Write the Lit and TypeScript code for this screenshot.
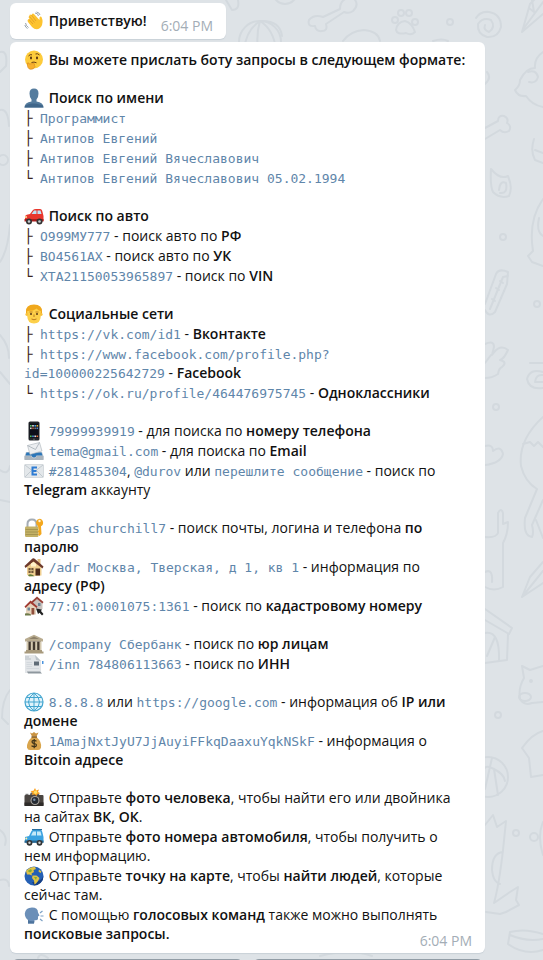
import { LitElement, html, css, svg, TemplateResult } from "lit";

const icons: Record<string, TemplateResult> = {
  wave: svg`
    <path d="M4 11 8 16Q12 20 16 17Q19 14 18.500 9L17.500 6Q16.500 5 15.500 6.500L15.500 9 10 3Q9 2 8 3L7.500 4 6 3.500Q5 4 5.500 5L4.500 6 5.500 8 4 8.500Q3 9.500 4 11Z" fill="#fdc32f"/>
    <path d="M7.500 4 12 10M5.500 5.500 10.500 11.500M5 8.500 9 13" stroke="#e09a28" stroke-width=".8" fill="none"/>
    <path d="M11 2Q14 2 14.500 5M12.500 1Q15.500 1.500 16 4M1.500 12Q2 15 4.500 16.500M.8 14Q1.500 16.500 3.500 17.500" stroke="#8d9aa5" stroke-width=".9" fill="none"/>`,
  think: svg`
    <circle cx="10" cy="9.500" r="9" fill="#fdcb3b"/>
    <ellipse cx="7" cy="8" rx="1" ry="1.400" fill="#553010"/><ellipse cx="13" cy="8" rx="1" ry="1.400" fill="#553010"/>
    <path d="M4.500 6Q6 4 8 4.800M11.500 4Q13.500 3 15.500 5M7.500 12.500Q10 11.500 12.500 12.800" stroke="#6b3f12" stroke-width="1" fill="none"/>
    <path d="M3.500 13Q4.500 12 5 14L10 13.500Q11.500 14 10 15L11 16.500Q10 19.500 6.500 19.300Q3 19 3.500 13Z" fill="#f8b02d" stroke="#d68419" stroke-width=".6"/>`,
  bust: svg`
    <path d="M10 .5Q14.500 .5 14.500 5.500Q14.500 9.500 12.500 11.500V13.500Q19.500 14.500 19.500 19.500H.5Q.5 14.500 7.500 13.500V11.500Q5.500 9.500 5.500 5.500Q5.500 .5 10 .5Z" fill="#557c9e"/>
    <path d="M1 18Q4 15 10 15.500T19 18L19.500 19.500H.5Z" fill="#3f668a"/>`,
  car: svg`
    <path d="M1 10Q2 8.500 6 8L9 4Q10 3 12 3H16Q18 3 18.500 6L19.500 10V15H1Z" fill="#e8372d"/>
    <path d="M7.500 8 10 4.500H12.500V8ZM13.500 4.500H16.500L17.500 8H13.500Z" fill="#bfe3f5"/>
    <path d="M.5 13H19.500V15.500H.5Z" fill="#a81d1c"/>
    <circle cx="5" cy="15.500" r="3" fill="#333"/><circle cx="5" cy="15.500" r="1.300" fill="#c9ced2"/>
    <circle cx="15.500" cy="15.500" r="3" fill="#333"/><circle cx="15.500" cy="15.500" r="1.300" fill="#c9ced2"/>
    <circle cx="2" cy="11" r="1" fill="#ffe9a0"/>`,
  man: svg`
    <path d="M2 8Q1.500 .5 10 .5T18 8V10H2Z" fill="#f0a81c"/>
    <path d="M3.200 7Q10 7 12.500 4.500Q14.500 6.500 16.800 7V12Q16.500 19.500 10 19.500T3.200 12Z" fill="#fdd04a"/>
    <circle cx="2.800" cy="10.500" r="1.400" fill="#f9c23c"/><circle cx="17.200" cy="10.500" r="1.400" fill="#f9c23c"/>
    <circle cx="7" cy="10" r="1" fill="#5a3a17"/><circle cx="13" cy="10" r="1" fill="#5a3a17"/>
    <path d="M5.500 8H8.500M11.500 8H14.500M7.500 15Q10 16.500 12.500 15M10 10.500V13" stroke="#b5741b" stroke-width=".9" fill="none"/>`,
  phone: svg`
    <rect x="4.500" y=".5" width="11" height="19" rx="1.600" fill="#23262b"/>
    <rect x="5.500" y="2.500" width="9" height="14.500" fill="#0c0e18"/>
    <g><rect x="6" y="4" width="1.600" height="1.600" fill="#53c36b"/><rect x="8.200" y="4" width="1.600" height="1.600" fill="#e9e9e9"/><rect x="10.400" y="4" width="1.600" height="1.600" fill="#4aa3e8"/><rect x="12.500" y="4" width="1.600" height="1.600" fill="#e5b53c"/>
    <rect x="6" y="6.500" width="1.600" height="1.600" fill="#d4d4d4"/><rect x="8.200" y="6.500" width="1.600" height="1.600" fill="#b7653f"/><rect x="10.400" y="6.500" width="1.600" height="1.600" fill="#777"/><rect x="12.500" y="6.500" width="1.600" height="1.600" fill="#5a8bd6"/>
    <rect x="6" y="14.500" width="1.600" height="1.600" fill="#50c15b"/><rect x="8.200" y="14.500" width="1.600" height="1.600" fill="#4b8fdd"/><rect x="10.400" y="14.500" width="1.600" height="1.600" fill="#ddd"/><rect x="12.500" y="14.500" width="1.600" height="1.600" fill="#e9733c"/></g>
    <circle cx="10" cy="18.200" r=".8" fill="#666"/>`,
  inbox: svg`
    <path d="M2 11H18L19.500 15V18.500H.5V15Z" fill="#c3cbd3"/>
    <path d="M2.500 11.500H17.500L18.500 14.500H12.500Q12 16.500 10 16.500T7.500 14.500H1.500Z" fill="#2c76b8"/>
    <path d="M3.500 4.500 15.500 1.500 18 10 6 13.500Z" fill="#eceef0" stroke="#a9b1b8" stroke-width=".6"/>
    <path d="M3.500 4.500 11.500 8.500 15.500 1.500" fill="none" stroke="#a4adb5" stroke-width=".8"/>
    <path d="M.5 15H7Q8 17.500 10 17.500T13 15H19.500V19H.5Z" fill="#aab4bd"/>`,
  email: svg`
    <rect x=".5" y="3.500" width="19" height="13" rx=".8" fill="#e3e7ea" stroke="#c3c9ce" stroke-width=".6"/>
    <path d="M1 16 7.500 9.500M19 16 12.500 9.500M1 4 10 11 19 4" stroke="#b9c1c8" stroke-width=".8" fill="none"/>
    <path d="M13 6.500H8.500V13.500H13M8.500 10H12.500" stroke="#2e7cd3" stroke-width="2" fill="none"/>`,
  lock: svg`
    <path d="M3.500 9V6Q3.500 1.500 8 1.500T12.500 6V9" stroke="#a5adb5" stroke-width="2" fill="none"/>
    <rect x="1" y="8.500" width="13.500" height="10.500" rx="1.200" fill="#c3b166"/>
    <path d="M1.500 11.500H14M1.500 14H14M1.500 16.500H14" stroke="#9d8d4a" stroke-width=".8"/>
    <path d="M15.500 .8A4 4 0 0 1 17 8.300L17.500 16 15.500 18 14 16.500 14.800 15 13.800 13.500 14.800 12 14 8.200A4 4 0 0 1 15.500 .8Z" fill="#f3a71d"/>
    <circle cx="15.500" cy="3" r="1.200" fill="#fff4d6"/>`,
  house: svg`
    <path d="M3 9 9 3.500 17.500 10V18.500L5 19.500 3 17.500Z" fill="#f0cf91"/>
    <path d="M13.500 2H16.500V7H13.500Z" fill="#e2bd80"/>
    <path d="M.5 9 8.500 1.500Q10 1 11 2L19.500 9.500 18.500 11.500 9.500 4.500 1.500 11Z" fill="#6d3a2c"/>
    <path d="M7 6.500 9.500 5 12 7V9.500H7Z" fill="#fff2cb"/>
    <rect x="4.500" y="11" width="5" height="5" fill="#70563a"/><rect x="11.500" y="11.500" width="4.500" height="7" fill="#4c2c1c"/>
    <path d="M7 11V16M4.500 13.500H9.500" stroke="#e8cf92" stroke-width=".7"/>
    <path d="M4 18Q7 16 10.500 19.300H5Z" fill="#5c7a3a"/>`,
  houses: svg`
    <path d="M8 5 13 1.500 18.500 6V13H8Z" fill="#c9c2bd"/><path d="M7 6 13 .5 19.500 6 18.500 7.500 13 3 8 7.500Z" fill="#9a4137"/>
    <rect x="14" y="7" width="2.500" height="3" fill="#6e8494"/>
    <path d="M2 10 6.500 6 12 10.500V18.500H2Z" fill="#e6d4bd"/><path d="M.5 10.500 6.500 4.500 13.500 10.500 12.500 12 6.500 7.300 1.500 12Z" fill="#a03a31"/>
    <rect x="3.500" y="11.500" width="2.500" height="3" fill="#6d8799"/><rect x="7.500" y="12" width="2.800" height="6.500" fill="#91503d"/>
    <path d="M12 12.500 18 13.500 17 15 19.500 18 18 19.500 15.500 16.700 14 18Z" fill="#222"/>
    <path d="M1 17.500Q4 16.500 7 18.500V19.500H1Z" fill="#6e7b4a"/>`,
  bank: svg`
    <path d="M10 .8 19 5V7.500H1V5Z" fill="#b9ac90"/><path d="M10 2.500 15 5H5Z" fill="#8d8069"/>
    <rect x="3" y="7.500" width="14" height="9" fill="#42392f"/>
    <path d="M3.500 7.500V16.500M7.800 7.500V16.500M12.200 7.500V16.500M16.500 7.500V16.500" stroke="#d5cab1" stroke-width="2"/>
    <path d="M2 16H18V17.500H19.500V19.500H.5V17.500H2Z" fill="#a89a7d"/>`,
  news: svg`
    <path d="M1 1H11L17 7V19H1Z" fill="#e2e5e8"/><path d="M11 1 12 6 17 7Z" fill="#bcc3c9"/>
    <path d="M1 3H5M1 5H7" stroke="#aeb6bd" stroke-width=".8"/>
    <rect x="10" y="7.500" width="5" height="4" fill="#5f6b76"/><path d="M2.500 8.500H8M2.500 10.500H8M2.500 12.500H8M2.500 14.500H15" stroke="#cfd4d9" stroke-width=".8"/>
    <path d="M3 17.500H16L18 19.500H4Z" fill="#8e979e"/><path d="M18 7H19.500V10H18Z" fill="#4b94df"/>`,
  globe: svg`
    <circle cx="10" cy="10" r="9" fill="#e0f3fb" stroke="#43a5cf" stroke-width="1.200"/>
    <path d="M10 1V19M1 10H19M2.500 5.500H17.500M2.500 14.500H17.500M10 1Q4.500 5 4.500 10T10 19M10 1Q15.500 5 15.500 10T10 19" stroke="#43a5cf" stroke-width="1" fill="none"/>`,
  money: svg`
    <path d="M6 1.500 8 2.500 10 1 12 2.500 14.500 1.500 12.500 5.500H8Z" fill="#c99342"/>
    <path d="M8 6H12.500Q18 11 17 16.500Q16.500 19 14 19H6Q3.500 19 3 16.500Q2.500 11 8 6Z" fill="#d9a54d"/>
    <path d="M7.500 6H13" stroke="#7d5622" stroke-width="1.400"/>
    <path d="M12.500 10.300Q10 8.500 8.200 10Q7.500 12 10.200 12.500Q13 13.200 12.200 15Q10 16.600 7.500 14.800M10.200 8V17.300" stroke="#3d3319" stroke-width="1.200" fill="none"/>`,
  camera: svg`
    <rect x=".5" y="7" width="19" height="11" rx="1" fill="#4a4541"/>
    <path d="M5.500 7 7 4.500H14L15.500 7Z" fill="#65605c"/><rect x=".5" y="14.500" width="19" height="3.500" fill="#2e2b29"/>
    <path d="M1.500 7H4.500V5.800H1.500Z" fill="#777"/>
    <circle cx="11" cy="12.500" r="4.500" fill="#a8a39d"/><circle cx="11" cy="12.500" r="3.400" fill="#262b33"/><circle cx="10.300" cy="11.700" r="1.200" fill="#7b8fa6"/>
    <path d="M11 0 12.200 2.500 15 1.500 14 4 16.500 5.200 13.500 6 12.500 8 10.500 6.300 8 7 8.500 4.800 6.500 3 9.500 2.800Z" fill="#fda11e"/><circle cx="11.500" cy="4.300" r="1.700" fill="#ffe066"/>`,
  suv: svg`
    <path d="M1 10 5 9 7.500 4Q8 3 9.500 3H16.500Q18 3 18.300 5L19.500 10V15.500H1Z" fill="#3ba2e0"/>
    <path d="M7 8.500 9 4.500H12V8.500ZM13 4.500H16.500L17.500 8.500H13Z" fill="#c5e9f8"/>
    <path d="M.5 13.500H19.500V15.800H.5Z" fill="#28648f"/><path d="M8 2H18V3.200H8Z" fill="#276e9f"/>
    <circle cx="5.500" cy="15.800" r="2.900" fill="#343434"/><circle cx="5.500" cy="15.800" r="1.200" fill="#cbd0d4"/>
    <circle cx="15.500" cy="15.800" r="2.900" fill="#343434"/><circle cx="15.500" cy="15.800" r="1.200" fill="#cbd0d4"/>
    <circle cx="2.300" cy="11.500" r="1" fill="#fff0a8"/>`,
  earth: svg`
    <circle cx="10" cy="10" r="9.500" fill="#2560b4"/><path d="M10 19.500A9.500 9.500 0 0 0 19.500 10Q17 16 8 16Z" fill="#173f83"/>
    <path d="M2 5Q6 .5 11 1L12 3 9.500 4 10 6 7.500 7.500 8 9.500 5.500 8.500 3 8.500ZM8.500 9.500 12.500 9.500 15.500 12Q14.500 15 12 17.500L10.500 18.500 10 14.500 8 12ZM15 3.500 17.500 5.500 16.500 7 14.500 5.500Z" fill="#e0c244"/>
    <path d="M3.500 5 7 3 8 5 6 6.500ZM10 11H13L12 14Z" fill="#7cab3c"/>`,
  speak: svg`
    <path d="M8 2.500Q14 2.500 14 7.500L15.500 10.500 14 11.500V14Q13.500 15.500 10.500 15.200L10 18.500H4V15Q.8 12.500 .8 8.500Q1.500 2.500 8 2.500Z" fill="#6b8fb8"/>
    <path d="M4 15Q7 17 10.300 16L10 18.500H4Z" fill="#4d739c"/>
    <path d="M16 8 18.500 6M16.500 11H19.500M16 14 18.500 16" stroke="#7ba0c5" stroke-width="1.200"/>`,
};

const icon = (name: string) =>
  html`<svg class="icon" viewBox="0 0 20 20" aria-hidden="true">${icons[name]}</svg> `;
const mid = html`<span class="tree">├</span>`;
const end = html`<span class="tree">└</span>`;

const sections: TemplateResult[][] = [
  [html`${icon("think")}<b>Вы можете прислать боту запросы в следующем формате:</b>`],
  [
    html`${icon("bust")}<b>Поиск по имени</b>`,
    html`${mid}<code>Программист</code>`,
    html`${mid}<code>Антипов Евгений</code>`,
    html`${mid}<code>Антипов Евгений Вячеславович</code>`,
    html`${end}<code>Антипов Евгений Вячеславович 05.02.1994</code>`,
  ],
  [
    html`${icon("car")}<b>Поиск по авто</b>`,
    html`${mid}<code>О999МУ777</code> - поиск авто по <b>РФ</b>`,
    html`${mid}<code>ВО4561АХ</code> - поиск авто по <b>УК</b>`,
    html`${end}<code>XTA21150053965897</code> - поиск по <b>VIN</b>`,
  ],
  [
    html`${icon("man")}<b>Социальные сети</b>`,
    html`${mid}<code>https://vk.com/id1</code> - <b>Вконтакте</b>`,
    html`${mid}<code>https://www.facebook.com/profile.php?<wbr>id=100000225642729</code> - <b>Facebook</b>`,
    html`${end}<code>https://ok.ru/profile/464476975745</code> - <b>Одноклассники</b>`,
  ],
  [
    html`${icon("phone")}<code>79999939919</code> - для поиска по <b>номеру телефона</b>`,
    html`${icon("inbox")}<code>tema@gmail.com</code> - для поиска по <b>Email</b>`,
    html`${icon("email")}<code>#281485304</code>, <code>@durov</code> или <code>перешлите сообщение</code> - поиск по <b>Telegram</b> аккаунту`,
  ],
  [
    html`${icon("lock")}<code>/pas churchill7</code> - поиск почты, логина и телефона <b>по паролю</b>`,
    html`${icon("house")}<code>/adr Москва, Тверская, д 1, кв 1</code> - информация по <b>адресу (РФ)</b>`,
    html`${icon("houses")}<code>77:01:0001075:1361</code> - поиск по <b>кадастровому номеру</b>`,
  ],
  [
    html`${icon("bank")}<code>/company Сбербанк</code> - поиск по <b>юр лицам</b>`,
    html`${icon("news")}<code>/inn 784806113663</code> - поиск по <b>ИНН</b>`,
  ],
  [
    html`${icon("globe")}<code>8.8.8.8</code> или <code>https://google.com</code> - информация об <b>IP или домене</b>`,
    html`${icon("money")}<code>1AmajNxtJyU7JjAuyiFFkqDaaxuYqkNSkF</code> - информация о <b>Bitcoin адресе</b>`,
  ],
  [
    html`${icon("camera")}Отправьте <b>фото человека</b>, чтобы найти его или двойника на сайтах <b>ВК, ОК</b>.`,
    html`${icon("suv")}Отправьте <b>фото номера автомобиля</b>, чтобы получить о нем информацию.`,
    html`${icon("earth")}Отправьте <b>точку на карте</b>, чтобы <b>найти людей</b>, которые сейчас там.`,
    html`${icon("speak")}С помощью <b>голосовых команд</b> также можно выполнять <b>поисковые запросы.</b>`,
  ],
];

const wallpaper = svg`
  <circle cx="260" cy="42" r="21"/><path d="M260 21Q246 30 244 50M260 21Q256 34 258 50M260 21Q274 30 276 50M260 21Q280 20 282 36"/>
  <circle cx="285" cy="-8" r="12"/><path d="M226 0 232 10Q240 10 238 0"/>
  <path d="M323 17 340 9Q340 0 348 -2M355 0Q359 5 353 11 349 14 344 12L326 24Q328 31 322 31 316 32 315 26 307 27 309 20 314 14 323 17"/>
  <path d="M396 30Q397 22 405 21 412 23 415 32 411 36 406 33 397 35 396 30"/><circle cx="395" cy="20" r="3"/><circle cx="401" cy="13" r="3"/><circle cx="409" cy="13" r="3"/><circle cx="415" cy="22" r="3"/>
  <circle cx="450" cy="22" r="3"/>
  <path d="M476 18Q480 11 489 12 501 14 501 27 498 38 487 37 477 34 478 24 483 17 491 20 496 27 489 32 483 30 485 25"/>
  <path d="M522 32 530 4 536 -2M522 32 543 14M524 28 543 2M529 8 534 12 532 0"/>
  <path d="M343 41Q350 31 364 30 378 31 380 41M433 41Q442 38 448 41"/>
  <path d="M543 52Q534 58 535 68 526 68 520 80 520 86 515 90 518 97 526 96 532 105 543 107M528 72Q536 69 538 77 536 84 529 82"/>
  <path d="M485 84Q492 78 487 72M485 128 498 121Q498 115 504 116 509 118 507 123 512 126 509 131 504 134 500 130L485 139"/>
  <path d="M534 139Q530 151 535 160L543 163M535 150 543 153"/>
  <path d="M491 169Q490 186 493 192 500 199 509 196 513 188 508 176 500 180 491 169M499 190Q500 180 506 183 508 194 500 193"/>
  <circle cx="503" cy="237" r="3"/><path d="M543 199Q528 220 533 251L528 256 532 262 543 266M539 218Q536 232 543 236"/>
  <path d="M485 304 496 274Q499 268 508 272L507 284 495 312Q489 318 485 310M490 309 503 277 508 276"/><path d="M496 288 499 290M500 281 503 283M492 299 495 301"/>
  <circle cx="537" cy="304" r="3"/>
  <path d="M485 344Q494 340 494 347L492 355Q500 343 508 350 504 359 500 360 508 362 502 367 499 368 498 374 492 378 485 378M485 363 491 355"/>
  <path d="M530 363H543M543 372Q530 368 527 379 529 390 543 388M543 375Q536 374 535 382L543 382"/>
  <circle cx="496" cy="407" r="3"/><path d="M485 446Q493 444 493 451 501 445 503 454 501 463 485 465"/>
  <path d="M543 417Q518 440 521 466 525 482 537 489L525 518Q523 536 532 537 534 533 532 525L543 500M523 444 530 442 534 446 538 442 543 447M536 520 543 538"/>
  <path d="M485 537Q496 538 498 533L498 513Q501 507 503 513L503 524 508 522Q508 534 503 543V587Q494 592 485 587M485 572Q493 568 492 582"/>
  <path d="M522 597 530 577 543 562M522 597 543 583M522 597 543 571"/>
  <path d="M485 609 512 628 509 634 485 620M508 634 507 660 485 663M485 633Q500 630 499 661M487 656 495 637"/>
  <path d="M522 666 530 670 543 666M522 666 524 678Q518 688 520 699 524 706 532 703L543 702"/><ellipse cx="525" cy="697" rx="6" ry="4"/><circle cx="531" cy="681" r="1"/>
  <circle cx="498" cy="715" r="3"/><path d="M543 731Q532 734 522 748L529 758 531 777 543 775"/>
  <circle cx="488" cy="777" r="20"/><path d="M492 758 485 789M494 769 498 795M494 769Q504 774 505 781M494 769Q486 765 485 768"/>
  <path d="M485 825 493 815 497 827 506 821 503 850Q499 885 494 903L510 892 518 887 516 900 519 905 506 912 500 914 486 912M503 852Q492 853 492 870 493 882 500 884"/>
  <circle cx="516" cy="833" r="3"/><circle cx="534" cy="837" r="4"/><path d="M543 822Q537 836 543 855"/>
  <path d="M510 932Q525 928 543 934M510 932 508 944Q525 956 543 950M510 935Q526 942 543 939"/>
  <path d="M38 958Q40 952 48 958M320 956Q350 948 372 956M0 52Q8 50 6 66L0 72M0 110Q8 108 9 126M0 156A5 5 0 1 1 0 164M10 225Q8 250 0 262M0 335Q9 345 9 358M0 372 10 384M0 470Q8 476 10 466M0 500 10 502M10 690Q2 700 2 718L8 724M0 830Q8 836 5 845M0 880Q9 878 9 886"/>`;

class AppRoot extends LitElement {
  static styles = css`
    :host {
      display: block;
      position: relative;
      height: 100vh;
      overflow: hidden;
      background: #dee3e7;
      color: #111;
      font: 14px/19px "Open Sans", sans-serif;
    }
    .wallpaper {
      position: absolute;
      inset: 0;
      width: 100%;
      height: 100%;
      fill: none;
      stroke: #d3d9de;
      stroke-width: 2;
      stroke-linejoin: round;
      stroke-linecap: round;
    }
    .chat {
      position: relative;
      display: flex;
      flex-direction: column;
      align-items: flex-start;
      gap: 3px;
      padding: 3px 58px 0 10px;
    }
    .bubble {
      box-sizing: border-box;
      background: #fff;
      border-radius: 6px;
      box-shadow: 0 1px 1px #c9d1d8;
      padding: 8px 13px 8px 14px;
    }
    .short {
      display: flex;
      gap: 14px;
      height: 36px;
    }
    .short time {
      margin-top: 5px;
    }
    .long {
      display: grid;
      align-self: stretch;
    }
    .text,
    .long time {
      grid-area: 1 / 1;
    }
    .long time {
      place-self: end;
      line-height: 9px;
    }
    .text {
      display: flex;
      flex-direction: column;
      gap: 19px;
      padding: 0 4px 2px 0;
    }
    .section {
      display: flex;
      flex-direction: column;
      gap: 1px;
    }
    p {
      margin: 0;
    }
    b {
      font-weight: 600;
    }
    code {
      color: #5f86aa;
      font: 13px/13px "DejaVu Sans Mono", monospace;
    }
    time {
      color: #a3adb6;
    }
    .icon {
      width: 20px;
      height: 20px;
      margin: -3px 1px -3px 0;
      vertical-align: -2px;
    }
    .tree {
      display: inline-block;
      width: 16px;
      color: #3a2420;
      font-family: "DejaVu Sans", sans-serif;
      line-height: 13px;
    }
    .keys {
      display: grid;
      grid-template-columns: 1fr 1fr;
      gap: 10px;
      align-self: stretch;
      margin-top: 3px;
      padding: 0 2px;
    }
    .keys button {
      height: 36px;
      border: 0;
      border-radius: 6px;
      background: #929da6;
    }
  `;

  render() {
    return html`
      <svg class="wallpaper" viewBox="0 0 543 960" preserveAspectRatio="xMaxYMin slice" aria-hidden="true">${wallpaper}</svg>
      <main class="chat">
        <article class="bubble short">
          <p>${icon("wave")}<b>Приветствую!</b></p>
          <time>6:04 PM</time>
        </article>
        <article class="bubble long">
          <div class="text">
            ${sections.map((s) => html`<section class="section">${s.map((line) => html`<p>${line}</p>`)}</section>`)}
          </div>
          <time>6:04 PM</time>
        </article>
        <div class="keys"><button type="button"></button><button type="button"></button></div>
      </main>
    `;
  }
}
customElements.define("app-root", AppRoot);
